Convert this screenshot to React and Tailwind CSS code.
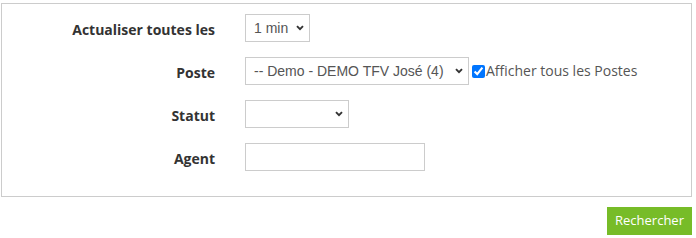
import React from "react";

function Chevron() {
  return (
    <svg className="pointer-events-none absolute right-[6px] top-1/2 -translate-y-1/2" width="8" height="6" viewBox="0 0 8 6">
      <path d="M1 1.2 L4 4.2 L7 1.2" fill="none" stroke="#333" strokeWidth="1.9" />
    </svg>
  );
}

function Select({ w, children }) {
  return (
    <div className={`relative h-[28px] ${w}`}>
      <select className="h-full w-full appearance-none border border-[#cccccc] bg-white pl-[8px] pr-[20px] text-[14px] text-[#555555] [font-family:'Liberation_Sans',Arial,sans-serif] outline-none">
        {children}
      </select>
      <Chevron />
    </div>
  );
}

function Row({ label, children }) {
  return (
    <div className="flex h-[28px] items-center">
      <div className="w-[213px] pt-[3px] text-right text-[14px] font-bold text-[#333333]">{label}</div>
      <div className="ml-[30px] flex h-full items-start">{children}</div>
    </div>
  );
}

export default function App() {
  return (
    <div className="w-[696px] h-[238px] bg-white pl-[1px] pt-[3px] [font-family:'Open_Sans',sans-serif]">
      <div className="w-[691px] h-[194px] border border-[#cccccc] pt-[10px] flex flex-col gap-[15px]">
        <Row label="Actualiser toutes les">
          <Select w="w-[65px]">
            <option>1 min</option>
          </Select>
        </Row>
        <Row label="Poste">
          <Select w="w-[224px]">
            <option>-- Demo - DEMO TFV José (4)</option>
          </Select>
          <label className="ml-[3px] mt-[5px] flex items-center text-[14px] text-[#555555] leading-[18px]">
            <input type="checkbox" defaultChecked className="m-0 h-[13px] w-[13px] accent-[#0075ff]" />
            <span className="ml-[1px]">Afficher tous les Postes</span>
          </label>
        </Row>
        <Row label="Statut">
          <Select w="w-[104px]">
            <option></option>
          </Select>
        </Row>
        <Row label="Agent">
          <input type="text" className="h-[28px] w-[180px] border border-[#cccccc] bg-white outline-none" />
        </Row>
      </div>
      <div className="flex justify-end pr-[4px] mt-[10px]">
        <button className="h-[28px] w-[85px] bg-[#77bc28] text-[13px] text-white">Rechercher</button>
      </div>
    </div>
  );
}
